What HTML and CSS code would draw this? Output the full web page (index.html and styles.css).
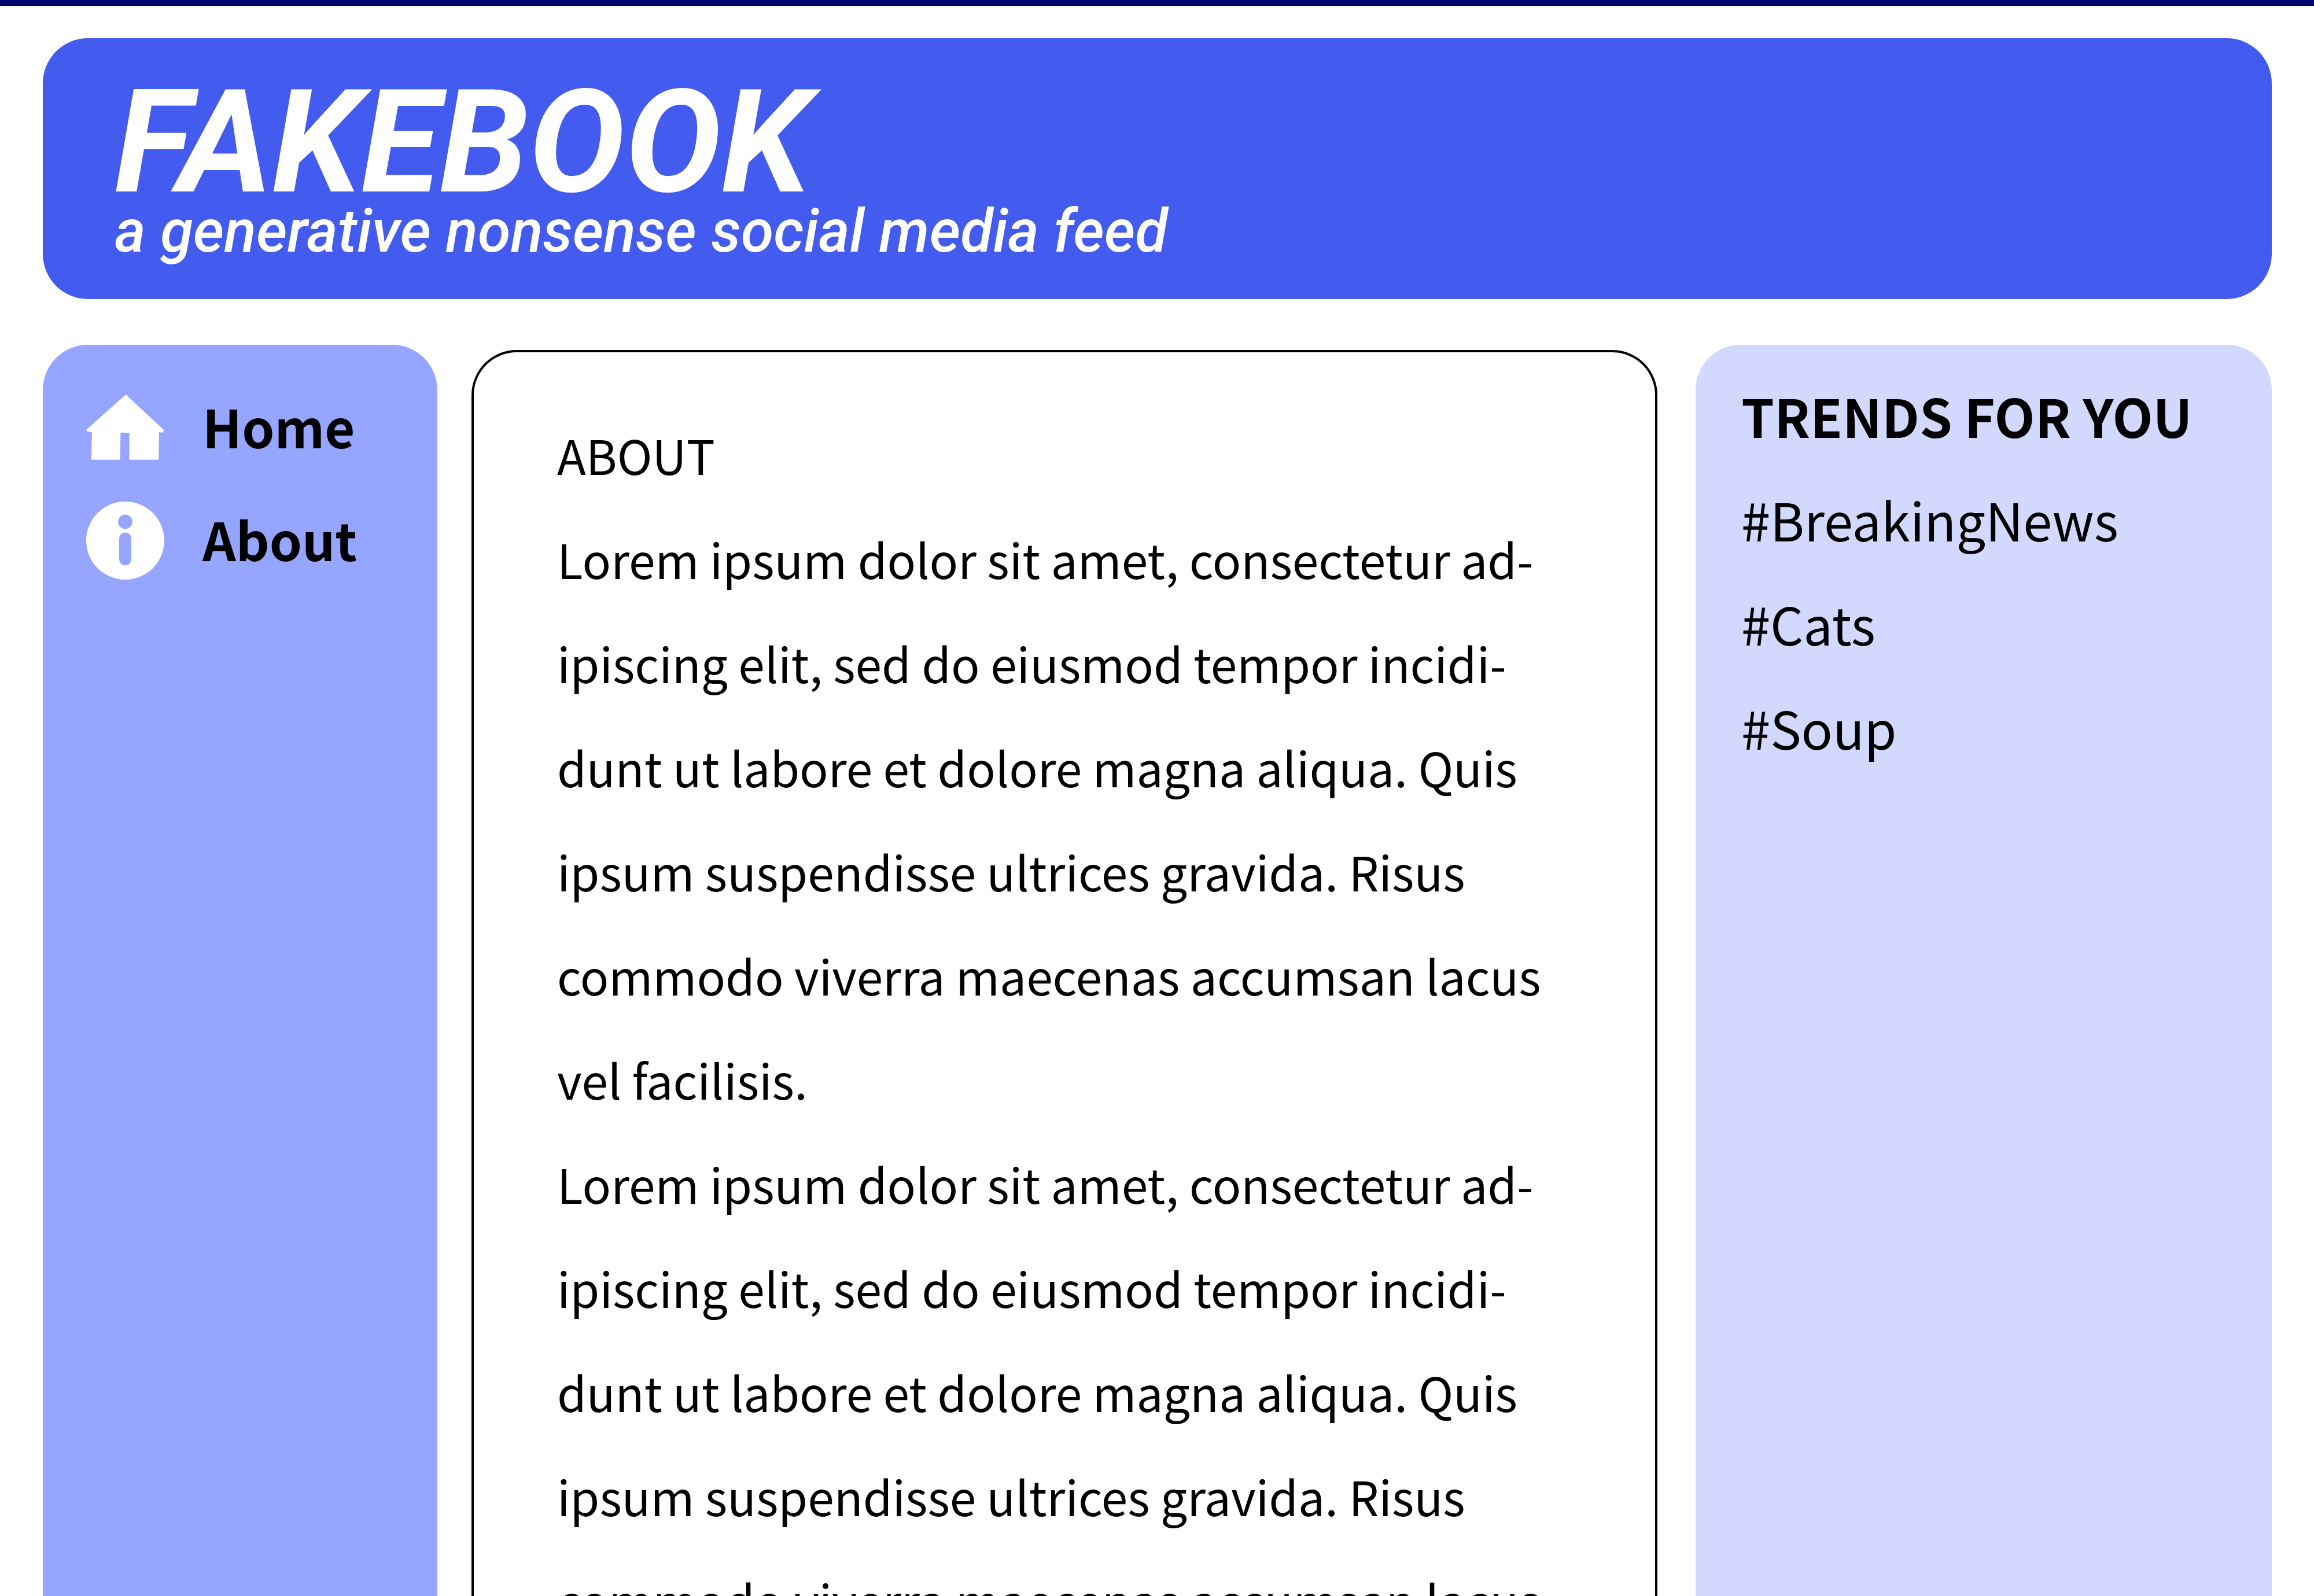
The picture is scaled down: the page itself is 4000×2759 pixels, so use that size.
FILE: index.html
```html
<!DOCTYPE html>
<html lang="en">
<head>
<meta charset="utf-8">
<meta name="viewport" content="width=device-width, initial-scale=1">
<title>Fakebook - About</title>
<link rel="stylesheet" href="styles.css">
</head>
<body>
<header class="banner">
  <h1 class="banner-title">FAKEBOOK</h1>
  <p class="banner-tagline">a generative nonsense social media feed</p>
</header>
<div class="columns">
  <nav class="menu">
    <a class="menu-link" href="#home">
      <svg class="menu-icon" viewBox="0 0 135 135" aria-hidden="true"><path fill="currentColor" d="M68.5 10L0 71.3L2.4 74L10 74.7L8.8 122.7H58.8L59.3 75.7L74.5 76.3V122.7H125.4L125.9 75.3L131.8 75.7L135 72Z"/></svg>
      <span>Home</span>
    </a>
    <a class="menu-link" href="#about">
      <svg class="menu-icon" viewBox="0 0 135 135" aria-hidden="true"><circle cx="67.5" cy="67.5" r="67.5" fill="currentColor"/><circle class="icon-hole" cx="67.5" cy="35" r="12.4"/><rect class="icon-hole" x="57" y="53.5" width="21" height="57" rx="10.5"/></svg>
      <span>About</span>
    </a>
  </nav>
  <main class="feed">
    <h2 class="feed-title">ABOUT</h2>
    <p>Lorem ipsum dolor sit amet, consectetur ad&shy;ipiscing elit, sed do eiusmod tempor incidi&shy;dunt ut labore et dolore magna aliqua. Quis ipsum suspendisse ultrices gravida. Risus commodo viverra maecenas accumsan lacus vel facilisis.</p>
    <p>Lorem ipsum dolor sit amet, consectetur ad&shy;ipiscing elit, sed do eiusmod tempor incidi&shy;dunt ut labore et dolore magna aliqua. Quis ipsum suspendisse ultrices gravida. Risus commodo viverra maecenas accumsan lacus</p>
  </main>
  <aside class="trends">
    <h2 class="trends-title">TRENDS FOR YOU</h2>
    <ul class="trends-list">
      <li><a href="#breakingnews">#BreakingNews</a></li>
      <li><a href="#cats">#Cats</a></li>
      <li><a href="#soup">#Soup</a></li>
    </ul>
  </aside>
</div>
</body>
</html>
```
FILE: styles.css
```css
* {
  box-sizing: border-box;
}

h1, h2, p, ul {
  margin: 0;
  padding: 0;
}

a {
  color: inherit;
  text-decoration: none;
}

body {
  display: flex;
  flex-direction: column;
  height: 100vh;
  margin: 0;
  padding: 56px 73px 0 74px;
  overflow: hidden;
  border-top: 10px solid #000870;
  background: #fff;
  color: #000;
  font-family: "Noto Sans CJK SC", "Noto Sans", sans-serif;
}

.banner {
  flex: none;
  padding: 78px 124px 65px;
  border-radius: 78px;
  background: #435bef;
  color: #fff;
  font-family: Roboto, "Liberation Sans", sans-serif;
  font-style: italic;
}

.banner-title {
  font-size: 249px;
  font-weight: 700;
  line-height: 204px;
}

.banner-tagline {
  font-size: 103px;
  font-weight: 500;
  line-height: 104px;
}

.columns {
  display: grid;
  flex: 1;
  grid-template-columns: 682fr 2175fr 996fr;
  min-height: 0;
  margin-top: 79px;
}

.menu {
  padding: 43px 0 0 75px;
  border-radius: 78px 78px 0 0;
  background: #96a5ff;
  font-size: 90px;
  font-weight: 700;
}

.menu-link {
  display: flex;
  align-items: center;
  gap: 66px;
  line-height: 195px;
}

.menu-icon {
  flex: none;
  width: 135px;
  height: 135px;
  margin-top: 6px;
  color: #fff;
}

.icon-hole {
  fill: #96a5ff;
}

.feed {
  min-width: 0;
  margin: 9px 66px 0 59px;
  padding: 87px 178px 0 144px;
  border: 4px solid #000;
  border-bottom: 0;
  border-radius: 78px 78px 0 0;
  font-size: 82px;
  line-height: 180px;
  hyphens: manual;
  hyphenate-character: "-";
}

.feed-title {
  font-size: 82px;
  font-weight: 400;
}

.trends {
  padding: 31px 0 0 79px;
  border-radius: 78px 78px 0 0;
  background: #d3d8ff;
  font-size: 90px;
  line-height: 180px;
}

.trends-title {
  font-size: 91px;
  font-weight: 700;
}

.trends-list {
  list-style: none;
}
```
